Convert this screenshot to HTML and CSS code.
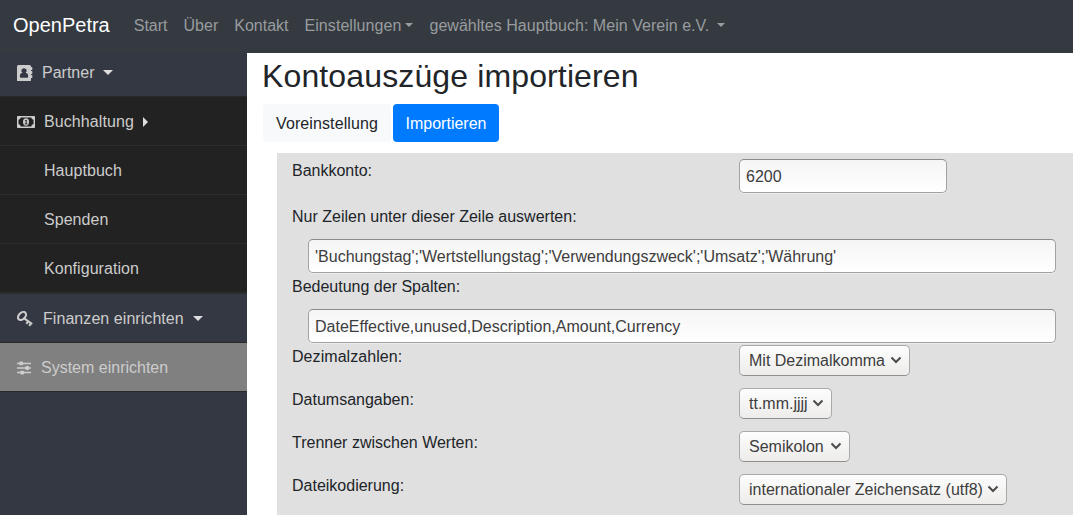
FILE: index.html
```html
<!DOCTYPE html>
<html lang="de">
<head>
<meta charset="utf-8">
<title>OpenPetra</title>
<link rel="stylesheet" href="styles.css">
</head>
<body>
<nav class="navbar">
  <a class="brand">OpenPetra</a>
  <a class="nav-link">Start</a>
  <a class="nav-link">Über</a>
  <a class="nav-link">Kontakt</a>
  <a class="nav-link dropdown">Einstellungen</a>
  <a class="nav-link dropdown ledger">gewähltes Hauptbuch: Mein Verein e.V.&nbsp;</a>
</nav>
<div class="layout">
  <aside class="sidebar">
    <a class="item first">
      <svg class="icon" width="16" height="16" viewBox="0 0 16 16"><path fill="currentColor" fill-rule="evenodd" d="M1.500 0h11A1.500 1.500 0 0 1 14 1.500V2h.8a.5.5 0 0 1 .5.500v2a.5.5 0 0 1-.5.500H14v1h.8a.5.5 0 0 1 .5.500v2a.5.5 0 0 1-.5.500H14v1h.8a.5.5 0 0 1 .5.500v2a.5.5 0 0 1-.5.500H14v2a1.500 1.500 0 0 1-1.500 1.500h-11A1.500 1.500 0 0 1 0 14.500v-13A1.500 1.500 0 0 1 1.500 0zM7 3.200a2.500 2.500 0 0 0-1.600 4.500C3.800 8.100 2.900 9.200 2.900 10.800v1.200q0 .8.800.8h6.600q.8 0 .8-.8v-1.200c0-1.600-.9-2.700-2.500-3.100A2.500 2.500 0 0 0 7 3.200z"/></svg>
      <span class="partner">Partner</span><i class="tri-down"></i>
    </a>
    <a class="item dark">
      <svg class="icon" width="18" height="12" viewBox="0 0 18 12"><path fill="currentColor" fill-rule="evenodd" d="M.8 0h16.400a.8.8 0 0 1 .8.800v10.400a.8.8 0 0 1-.8.800H.8a.8.8 0 0 1-.8-.800V.8A.8.8 0 0 1 .8 0zM3.700 1.500A2.300 2.300 0 0 1 1.500 3.700v4.600a2.300 2.300 0 0 1 2.200 2.200h10.600a2.300 2.300 0 0 1 2.200-2.200V3.700a2.300 2.300 0 0 1-2.200-2.200z"/><ellipse cx="9" cy="6" rx="3" ry="3.700" fill="currentColor"/><path d="M8 4.700l1.200-.6v3.500M7.800 7.900h2.600" fill="none" stroke="#222"/></svg>
      <span class="buch">Buchhaltung</span><i class="tri-right"></i>
    </a>
    <a class="item dark sub">Hauptbuch</a>
    <a class="item dark sub">Spenden</a>
    <a class="item dark sub last">Konfiguration</a>
    <a class="item">
      <svg class="icon" width="16" height="16" viewBox="0 0 16 16"><g fill="none" stroke="currentColor" stroke-width="2.100"><ellipse cx="5" cy="5" rx="4.700" ry="3.200" transform="rotate(-45 5 5)"/><path d="M6.800 7.200l8.400 5.800M11.300 10.200l-1.900 2.700M14.200 12l-2 2.900" /></g></svg>
      <span class="fin">Finanzen einrichten</span><i class="tri-down"></i>
    </a>
    <a class="item active">
      <svg class="icon" width="14" height="14" viewBox="0 0 14 14"><path d="M0 2.500h14M0 7h14M0 11.500h14" stroke="currentColor" stroke-width="1.300"/><g fill="currentColor"><rect x="2.300" y=".5" width="3.800" height="3.800" rx=".8"/><rect x="8.300" y="5.100" width="3.800" height="3.800" rx=".8"/><rect x="3.300" y="9.700" width="3.800" height="3.800" rx=".8"/></g></svg>
      <span class="system">System einrichten</span>
    </a>
  </aside>
  <main class="main">
    <h2>Kontoauszüge importieren</h2>
    <div class="tabs"><button class="btn preset">Voreinstellung</button><button class="btn primary">Importieren</button></div>
    <form class="panel">
      <div class="row account"><label>Bankkonto:</label><input class="text" value="6200"></div>
      <div class="block"><label>Nur Zeilen unter dieser Zeile auswerten:</label><input class="text wide" value="'Buchungstag';'Wertstellungstag';'Verwendungszweck';'Umsatz';'Währung'"></div>
      <div class="block"><label>Bedeutung der Spalten:</label><input class="text wide" value="DateEffective,unused,Description,Amount,Currency"></div>
      <div class="row"><label class="spaced">Dezimalzahlen:</label><div class="select decimal">Mit Dezimalkomma<svg width="12" height="8" viewBox="0 0 12 8"><path d="M1.500 1.500L6 6l4.500-4.500"/></svg></div></div>
      <div class="row"><label>Datumsangaben:</label><div class="select date">tt.mm.jjjj<svg width="12" height="8" viewBox="0 0 12 8"><path d="M1.500 1.500L6 6l4.500-4.500"/></svg></div></div>
      <div class="row"><label>Trenner zwischen Werten:</label><div class="select separator">Semikolon<svg width="12" height="8" viewBox="0 0 12 8"><path d="M1.500 1.500L6 6l4.500-4.500"/></svg></div></div>
      <div class="row"><label>Dateikodierung:</label><div class="select encoding">internationaler Zeichensatz (utf8)<svg width="12" height="8" viewBox="0 0 12 8"><path d="M1.500 1.500L6 6l4.500-4.500"/></svg></div></div>
    </form>
  </main>
</div>
</body>
</html>
```
FILE: styles.css
```css
* { box-sizing: border-box; }
body {
  margin: 0;
  height: 515px;
  overflow: hidden;
  font: 16px/24px "Liberation Sans", Arial, sans-serif;
  color: #212529;
  background: #fff;
}
.navbar {
  height: 53px;
  display: flex;
  align-items: center;
  padding: 0 13px 3px;
  background: #343a40;
  color: #999c9f;
  white-space: nowrap;
}
.brand { font-size: 20px; line-height: 30px; color: #fff; margin-right: 16px; }
.nav-link { padding: 2px 8px 0; }
.dropdown { letter-spacing: .07px; }
.dropdown::after {
  content: "";
  display: inline-block;
  margin-left: 4px;
  vertical-align: 4px;
  border: 4px solid transparent;
  border-top-color: currentColor;
  border-bottom: 0;
}
.ledger { letter-spacing: .03px; }
.ledger::after { margin-left: 3px; }
.layout { display: flex; height: 462px; }
.sidebar { width: 247px; flex: none; background: #343842; color: #ccc; }
.item {
  display: flex;
  align-items: center;
  height: 49px;
  padding: 1px 0 0 17px;
  border-bottom: 1px solid #292929;
}
.first { height: 44px; padding: 0 0 4px 17px; }
.dark { background: #222; border-bottom-color: #2e2e2e; }
.sub { padding: 2px 0 0 44px; letter-spacing: .05px; }
.last { height: 50px; padding-top: 2px; border-bottom: 2px solid #2b2b2c; }
.active { padding-top: 2px; background: gray; }
.icon { flex: none; display: block; }
.active .icon { margin-bottom: 1px; }
.partner { margin-left: 9px; }
.buch { margin-left: 9px; letter-spacing: .1px; }
.fin { margin-left: 10px; letter-spacing: .06px; }
.system { margin-left: 10px; }
.tri-down { margin-left: 9px; border: 5px solid transparent; border-top-color: #ddd; border-bottom: 0; }
.tri-right { margin-left: 9px; border: 5px solid transparent; border-left-color: #ddd; border-right: 0; }
.main { flex: 1; padding-top: 4px; min-width: 0; }
h2 { margin: 0 0 9px 15px; font-size: 32px; line-height: 38px; font-weight: 400; letter-spacing: .13px; }
.tabs { display: flex; gap: 2px; margin-left: 16px; }
.btn {
  height: 38px;
  padding: 2px 0 0;
  width: 106px;
  border: 0;
  border-radius: 4px;
  font: inherit;
  color: #212529;
  background: #f8f9fa;
}
.preset { width: 128px; letter-spacing: .1px; }
.primary { background: #007bff; color: #fff; }
.panel { margin: 11px 0 0 30px; height: 362px; padding: 5px 17px 0 15px; background: #e0e0e0; }
label { padding-top: 1px; }
.spaced { letter-spacing: .06px; }
.row { display: grid; grid-template-columns: 447px 1fr; align-items: start; height: 43px; }
.account { height: 46px; }
.block { height: 70px; display: flex; flex-direction: column; gap: 11px; }
.block label { height: 24px; }
.text {
  width: 208px;
  height: 34px;
  margin-top: 1px;
  padding: 2px 6px 0;
  border: 1px solid #a2a2a2;
  border-top-color: #8b8b8b;
  border-radius: 5px;
  font: inherit;
  color: #3d3d3d;
  background: linear-gradient(#f5f5f5, #fff);
  box-shadow: 0 1px 0 #ededed;
}
.wide { width: auto; margin: 0 0 0 16px; flex: none; }
.select {
  display: flex;
  align-items: center;
  justify-content: space-between;
  height: 31px;
  margin-top: 1px;
  padding: 0 7px 0 9px;
  border: 1px solid #a9a9a9;
  border-bottom-color: #8f8f8f;
  border-radius: 5px;
  color: #3d3d3d;
  background: linear-gradient(#fdfdfd, #edecea);
  white-space: nowrap;
}
.select svg { margin-bottom: 1px; }
.select path { fill: none; stroke: #4b4b4b; stroke-width: 2; }
.decimal { width: 171px; }
.date { width: 93px; }
.separator { width: 111px; }
.encoding { width: 268px; }
```
